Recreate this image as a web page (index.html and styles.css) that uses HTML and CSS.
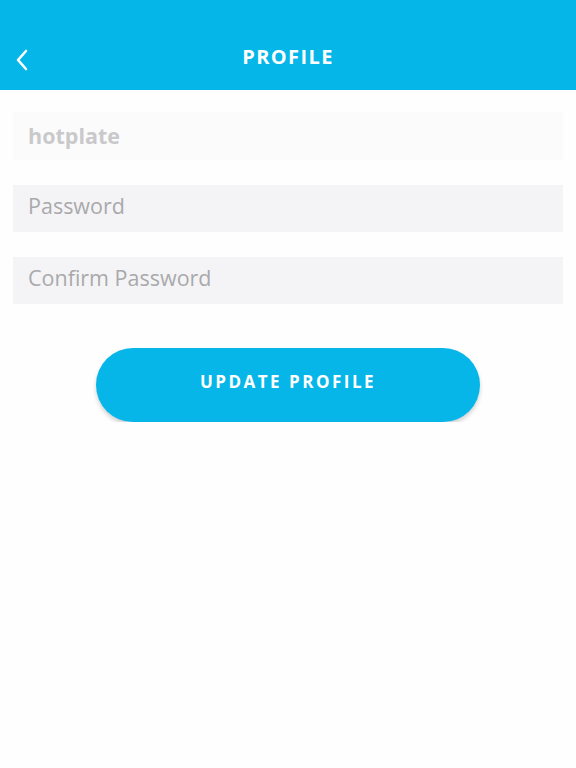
FILE: index.html
```html
<!DOCTYPE html>
<html lang="en">
<head>
    <meta charset="UTF-8">
    <meta name="viewport" content="width=device-width, initial-scale=1.0">
    <title>Profile</title>
    <link rel="stylesheet" href="styles.css">
</head>
    <body>
        <div id="header">
            <a href="#" id="back">
                <svg width="16" height="24" viewBox="0 0 16 24">
                    <polyline points="12,3 4,12 12,21" fill="none" stroke="#fff" stroke-width="2.6" stroke-linecap="round" stroke-linejoin="round"/>
                </svg>
            </a>
            <h1>PROFILE</h1>
        </div>
        <div id="profile">
            <form action="#" method="post">
                <input type="text" name="username" id="username" value="hotplate" class="field field_name" readonly>
                <input type="password" name="password" id="password" placeholder="Password" class="field">
                <input type="password" name="confirm" id="confirm" placeholder="Confirm Password" class="field">
                <div id="submit_row">
                    <input type="submit" value="UPDATE PROFILE" id="update">
                </div>
            </form>
        </div>
    </body>
</html>
```
FILE: styles.css
```css
body {
    margin: 0;
    background-color: #fefeff;
    font-family: 'Open Sans', sans-serif;
}

#header {
    background-color: #05b6e8;
    height: 90px;
    display: flex;
    align-items: center;
    justify-content: center;
    position: relative;
    padding-top: 22px;
    box-sizing: border-box;
}

#header h1 {
    margin: 0;
    color: #fff;
    font-size: 20px;
    font-weight: 700;
    letter-spacing: 1.4px;
}

#back {
    position: absolute;
    left: 14px;
    top: 48px;
    display: block;
    width: 16px;
    height: 24px;
}

#profile form {
    display: flex;
    flex-direction: column;
    gap: 25px;
    padding: 22px 13px 0 13px;
}

.field {
    box-sizing: border-box;
    height: 47px;
    border: none;
    background-color: #f4f4f6;
    font-family: 'Open Sans', sans-serif;
    font-size: 21.5px;
    color: #aaa;
    padding: 0 15px 7px 15px;
    outline: none;
}

.field::placeholder {
    color: #a9a9ab;
}

.field_name {
    height: 48px;
    background-color: #fbfbfc;
    color: #c9c9cb;
    font-weight: 700;
    padding-bottom: 2px;
}

#submit_row {
    display: flex;
    justify-content: center;
    padding-top: 19px;
}

#update {
    box-sizing: border-box;
    width: 384px;
    height: 74px;
    border: none;
    border-radius: 37px;
    background-color: #06b6e8;
    color: #fff;
    font-family: 'Open Sans', sans-serif;
    font-size: 17px;
    font-weight: 700;
    letter-spacing: 2.5px;
    box-shadow: 0 3px 4px rgba(0, 0, 0, 0.18);
    padding-bottom: 8px;
}
```
